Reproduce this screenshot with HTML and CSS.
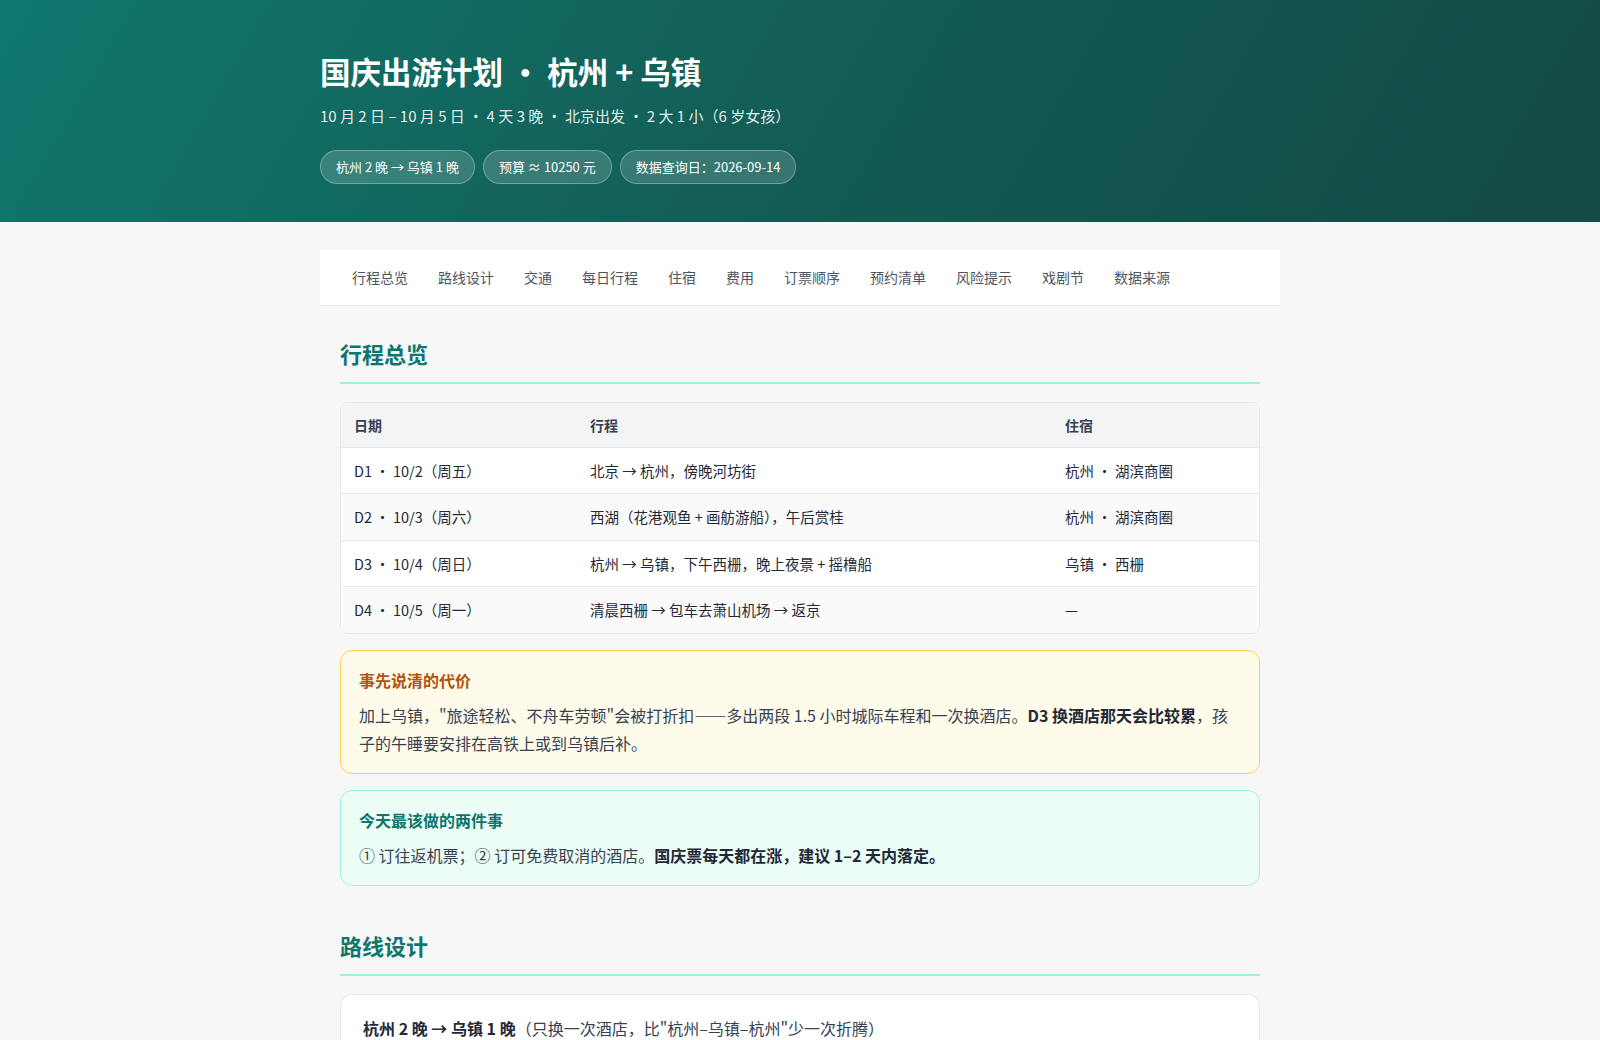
FILE: index.html
```html
<!DOCTYPE html>
<html lang="zh-CN">
<head>
<meta charset="utf-8">
<title>国庆出游计划 · 杭州 + 乌镇</title>
<link rel="stylesheet" href="styles.css">
</head>
<body>
<header class="hero">
  <div class="wrap">
    <h1 class="hero-title">国庆出游计划 · 杭州 + 乌镇</h1>
    <p class="hero-sub">10 月 2 日 – 10 月 5 日 · 4 天 3 晚 · 北京出发 · 2 大 1 小（6 岁女孩）</p>
    <div class="pills">
      <span class="pill">杭州 2 晚 → 乌镇 1 晚</span>
      <span class="pill">预算 ≈ 10250 元</span>
      <span class="pill">数据查询日：2026-09-14</span>
    </div>
  </div>
</header>

<div class="wrap">
  <nav class="tabs">
    <a class="tab">行程总览</a>
    <a class="tab">路线设计</a>
    <a class="tab">交通</a>
    <a class="tab">每日行程</a>
    <a class="tab">住宿</a>
    <a class="tab">费用</a>
    <a class="tab">订票顺序</a>
    <a class="tab">预约清单</a>
    <a class="tab">风险提示</a>
    <a class="tab">戏剧节</a>
    <a class="tab">数据来源</a>
  </nav>

  <section class="section">
    <h2 class="section-title">行程总览</h2>
    <div class="table-box">
      <table class="plan">
        <thead>
          <tr><th class="c1">日期</th><th class="c2">行程</th><th class="c3">住宿</th></tr>
        </thead>
        <tbody>
          <tr><td>D1 · 10/2（周五）</td><td>北京 → 杭州，傍晚河坊街</td><td>杭州 · 湖滨商圈</td></tr>
          <tr><td>D2 · 10/3（周六）</td><td>西湖（花港观鱼 + 画舫游船），午后赏桂</td><td>杭州 · 湖滨商圈</td></tr>
          <tr><td>D3 · 10/4（周日）</td><td>杭州 → 乌镇，下午西栅，晚上夜景 + 摇橹船</td><td>乌镇 · 西栅</td></tr>
          <tr><td>D4 · 10/5（周一）</td><td>清晨西栅 → 包车去萧山机场 → 返京</td><td>—</td></tr>
        </tbody>
      </table>
    </div>

    <div class="note note-warn">
      <div class="note-title">事先说清的代价</div>
      <p class="note-body">加上乌镇，"旅途轻松、不舟车劳顿"会被打折扣——多出两段 1.5 小时城际车程和一次换酒店。<strong>D3 换酒店那天会比较累</strong>，孩子的午睡要安排在高铁上或到乌镇后补。</p>
    </div>

    <div class="note note-ok">
      <div class="note-title">今天最该做的两件事</div>
      <p class="note-body">① 订往返机票；② 订可免费取消的酒店。<strong>国庆票每天都在涨，建议 1–2 天内落定。</strong></p>
    </div>
  </section>

  <section class="section">
    <h2 class="section-title">路线设计</h2>
    <div class="card">
      <p class="card-text"><strong>杭州 2 晚 → 乌镇 1 晚</strong>（只换一次酒店，比"杭州–乌镇–杭州"少一次折腾）</p>
    </div>
  </section>
</div>
</body>
</html>
```

FILE: styles.css
```css
* { box-sizing: border-box; }

html, body {
  margin: 0;
  padding: 0;
}

body {
  background: #f7f7f7;
  color: #1f2937;
  font-family: "Noto Sans CJK SC", "Noto Sans", sans-serif;
  font-size: 16px;
  line-height: 1.6;
}

.wrap {
  width: 960px;
  margin: 0 auto;
}

/* Hero */
.hero {
  background: linear-gradient(120deg, #10786f 0%, #135a53 55%, #134a45 100%);
  color: #ffffff;
  padding: 49px 0 38px;
}

.hero-title {
  margin: 0;
  font-size: 30.5px;
  font-weight: 700;
  line-height: 44px;
}

.hero-sub {
  margin: 11px 0 0;
  font-size: 15px;
  line-height: 24px;
  color: rgba(255, 255, 255, 0.9);
}

.pills {
  display: flex;
  gap: 8px;
  margin-top: 22px;
}

.pill {
  display: inline-block;
  padding: 5px 15px;
  font-size: 13px;
  line-height: 22px;
  border-radius: 999px;
  background: rgba(255, 255, 255, 0.16);
  border: 1px solid rgba(255, 255, 255, 0.3);
  color: #ffffff;
}

/* Tabs */
.tabs {
  display: flex;
  margin-top: 28px;
  padding: 0 17px;
  background: #ffffff;
  border-bottom: 1px solid #e5e7eb;
}

.tab {
  padding: 17px 15px;
  font-size: 14px;
  line-height: 21px;
  color: #4b5563;
  text-decoration: none;
}

/* Sections */
.section {
  padding: 32px 20px 12px;
}

.section-title {
  margin: 0 0 18px;
  padding-bottom: 13px;
  font-size: 22px;
  line-height: 31px;
  font-weight: 700;
  color: #0f766e;
  border-bottom: 2px solid #99f6e4;
}

/* Table */
.table-box {
  background: #ffffff;
  border: 1px solid #e5e7eb;
  border-radius: 8px;
  overflow: hidden;
}

.plan {
  width: 100%;
  border-collapse: collapse;
  font-size: 14.5px;
  line-height: 22.4px;
}

.plan th,
.plan td {
  text-align: left;
  padding: 11px 13px;
  vertical-align: middle;
}

.plan th {
  background: #f3f4f6;
  color: #374151;
  font-weight: 700;
  font-size: 14px;
  padding-top: 11px;
  padding-bottom: 10.5px;
}

.plan td {
  color: #1f2937;
  border-top: 1px solid #e5e7eb;
  padding-top: 12px;
  padding-bottom: 11px;
}

.plan tbody tr:nth-child(even) td {
  background: #fafafa;
}

.c1 { width: 236px; }
.c2 { width: 475px; }

/* Notes */
.note {
  margin-top: 16px;
  padding: 16px 18px;
  border-radius: 12px;
  border: 1px solid;
}

.note-warn {
  background: #fffbeb;
  border-color: #fcd34d;
}

.note-ok {
  background: #ecfdf5;
  border-color: #99f6e4;
}

.note-title {
  font-size: 16px;
  line-height: 26px;
  font-weight: 700;
  margin-bottom: 8px;
}

.note-warn .note-title { color: #b45309; }
.note-ok .note-title { color: #0f766e; }

.note-body {
  margin: 0;
  font-size: 16px;
  line-height: 28px;
  color: #374151;
}

.note-body strong {
  color: #1f2937;
  font-weight: 700;
}

/* Card */
.card {
  background: #ffffff;
  border: 1px solid #e5e7eb;
  border-radius: 12px;
  padding: 20px 22px;
}

.card-text {
  margin: 0;
  font-size: 16px;
  line-height: 26px;
  color: #374151;
}

.card-text strong {
  color: #1f2937;
}
```
